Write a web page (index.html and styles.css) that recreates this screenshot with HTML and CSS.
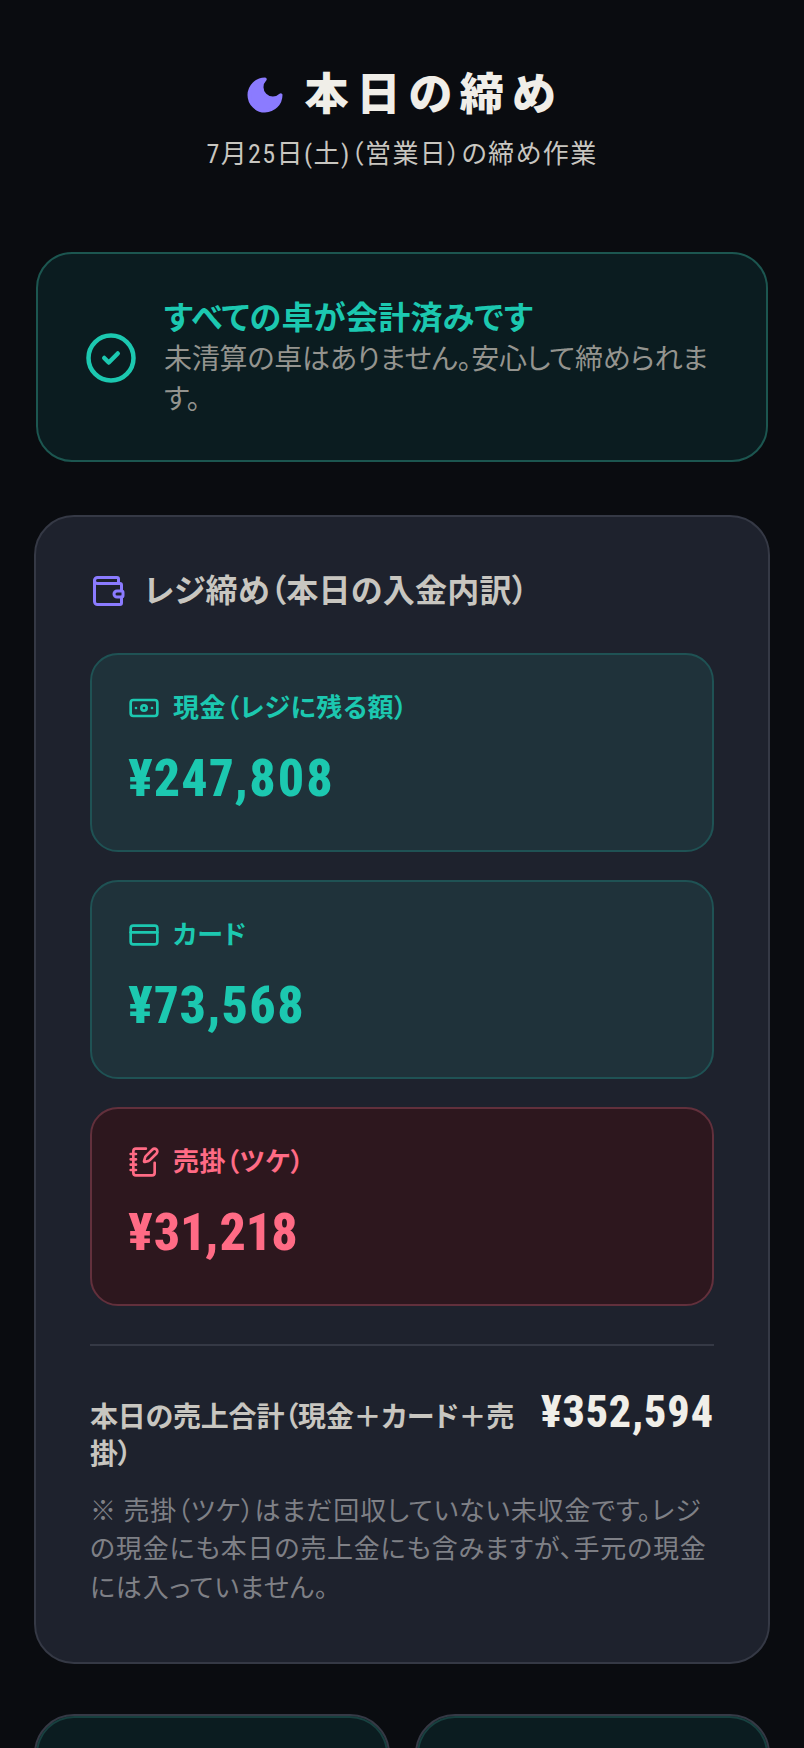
FILE: index.html
```html
<!DOCTYPE html>
<html lang="ja">
<head>
    <meta charset="UTF-8">
    <title>本日の締め</title>
    <link rel="stylesheet" href="styles.css">
</head>
<body>
    <header class="hero">
        <h1 class="hero-title">
            <svg class="moon" viewBox="0 0 24 24"><path d="M12 3a6 6 0 0 0 9 9 9 9 0 1 1-9-9Z"/></svg>
            本日の締め
        </h1>
        <p class="hero-sub">7月25日(土)（営業日）の締め作業</p>
    </header>

    <section class="alert">
        <svg class="alert-icon" viewBox="0 0 24 24"><circle cx="12" cy="12" r="10"/><path d="m9 12 2 2 4-4"/></svg>
        <div>
            <div class="alert-title">すべての卓が会計済みです</div>
            <div class="alert-text">未清算の卓はありません。安心して締められます。</div>
        </div>
    </section>

    <section class="card">
        <h2 class="card-title">
            <svg class="wallet" viewBox="0 0 24 24"><path d="M19 7V4a1 1 0 0 0-1-1H5a2 2 0 0 0 0 4h15a1 1 0 0 1 1 1v4h-3a2 2 0 0 0 0 4h3a1 1 0 0 0 1-1v-2a1 1 0 0 0-1-1"/><path d="M3 5v14a2 2 0 0 0 2 2h15a1 1 0 0 0 1-1v-4"/></svg>
            レジ締め（本日の入金内訳）
        </h2>

        <div class="tile">
            <div class="tile-label">
                <svg class="tile-icon" viewBox="0 0 24 24"><rect x="2" y="6" width="20" height="12" rx="2"/><circle cx="12" cy="12" r="2"/><path d="M6 12h.01M18 12h.01"/></svg>
                現金（レジに残る額）
            </div>
            <div class="tile-amount">¥247,808</div>
        </div>

        <div class="tile">
            <div class="tile-label">
                <svg class="tile-icon" viewBox="0 0 24 24"><rect x="2" y="5" width="20" height="14" rx="2"/><path d="M2 10h20"/></svg>
                カード
            </div>
            <div class="tile-amount">¥73,568</div>
        </div>

        <div class="tile tile-red">
            <div class="tile-label">
                <svg class="tile-icon" viewBox="0 0 24 24"><path d="M13.4 2H6a2 2 0 0 0-2 2v16a2 2 0 0 0 2 2h12a2 2 0 0 0 2-2v-7.4"/><path d="M2 6h4M2 10h4M2 14h4M2 18h4"/><path d="M21.378 5.626a1 1 0 1 0-3.004-3.004l-5.01 5.012a2 2 0 0 0-.506.854l-.837 2.87a.5.5 0 0 0 .62.62l2.87-.837a2 2 0 0 0 .854-.506z"/></svg>
                売掛（ツケ）
            </div>
            <div class="tile-amount">¥31,218</div>
        </div>

        <div class="total">
            <div class="total-label">本日の売上合計（現金＋カード＋売掛）</div>
            <div class="total-value">¥352,594</div>
        </div>
        <p class="note">※ 売掛（ツケ）はまだ回収していない未収金です。レジの現金にも本日の売上金にも含みますが、手元の現金には入っていません。</p>
    </section>

    <div class="bottom-row">
        <div class="bottom-card"></div>
        <div class="bottom-card"></div>
    </div>
</body>
</html>
```

FILE: styles.css
```css
* {
    box-sizing: border-box;
}
html, body {
    height: 1748px;
    overflow: hidden;
}
body {
    margin: 0;
    padding: 63px 34px 0;
    background: #0a0c10;
    color: #f0eee8;
    font-family: Roboto, "Noto Sans CJK JP", sans-serif;
    font-stretch: 80%;
    font-feature-settings: "palt";
}
.hero {
    text-align: center;
    margin-bottom: 80px;
}
.hero-title {
    margin: 0;
    padding-left: 4px;
    font-size: 44px;
    line-height: 64px;
    font-weight: 900;
    letter-spacing: 8px;
    display: flex;
    justify-content: center;
    align-items: center;
    gap: 18px;
}
.moon {
    width: 42px;
    height: 42px;
    fill: #8b7bff;
    stroke: #8b7bff;
    stroke-width: 2;
    stroke-linejoin: round;
}
.hero-sub {
    margin: 9px 0 0;
    font-size: 26px;
    line-height: 36px;
    letter-spacing: 1.4px;
    color: #c8c6c0;
}
.alert {
    margin: 0 2px 53px;
    padding: 42px 46px 40px;
    display: flex;
    align-items: center;
    gap: 26px;
    background: #0b1c20;
    border: 2px solid #1c5650;
    border-radius: 36px;
}
.alert-icon {
    flex: none;
    width: 54px;
    height: 54px;
    fill: none;
    stroke: #1cc8b0;
    stroke-width: 2;
    stroke-linecap: round;
    stroke-linejoin: round;
}
.alert-title {
    font-size: 32px;
    line-height: 44px;
    font-weight: 700;
    letter-spacing: 0.3px;
    color: #1cc8b0;
}
.alert-text {
    font-size: 28px;
    line-height: 40px;
    letter-spacing: -0.2px;
    color: #94948f;
}
.card {
    padding: 52px 54px 55px;
    background: #1e222d;
    border: 2px solid #353945;
    border-radius: 40px;
}
.card-title {
    margin: 0 0 40px;
    font-size: 32px;
    line-height: 44px;
    font-weight: 700;
    letter-spacing: 0.3px;
    color: #c8c6c0;
    display: flex;
    align-items: center;
    gap: 18px;
}
.wallet {
    width: 36px;
    height: 36px;
    fill: none;
    stroke: #8b7bff;
    stroke-width: 2;
    stroke-linecap: round;
    stroke-linejoin: round;
}
.tile {
    height: 199px;
    padding: 32px 36px;
    margin-bottom: 28px;
    background: #1f323a;
    border: 2px solid #1f5254;
    border-radius: 28px;
    color: #1cc8b0;
}
.tile-red {
    background: #2d171e;
    border-color: #62303c;
    color: #ff6b85;
    margin-bottom: 0;
}
.tile-label {
    display: flex;
    align-items: center;
    gap: 13px;
    font-size: 26px;
    line-height: 42px;
    font-weight: 700;
    letter-spacing: 0.6px;
}
.tile-icon {
    width: 32px;
    height: 32px;
    fill: none;
    stroke: currentColor;
    stroke-width: 2;
    stroke-linecap: round;
    stroke-linejoin: round;
}
.tile-amount {
    margin-top: 16px;
    font-size: 52px;
    line-height: 68px;
    font-weight: 800;
    letter-spacing: 1px;
    font-feature-settings: "pnum";
}
.total {
    margin-top: 38px;
    padding-top: 44px;
    border-top: 2px solid #353945;
    display: flex;
    justify-content: space-between;
    align-items: flex-start;
    gap: 24px;
}
.total-label {
    font-size: 28px;
    line-height: 37px;
    font-weight: 700;
    letter-spacing: -0.2px;
    color: #c8c6c0;
    margin-top: 9px;
}
.total-value {
    flex: none;
    font-size: 44px;
    line-height: 44px;
    font-weight: 800;
    letter-spacing: 0.8px;
    font-feature-settings: "pnum";
}
.note {
    margin: 19px 0 0;
    font-size: 26px;
    line-height: 38.4px;
    letter-spacing: 0.8px;
    color: #7f8086;
}
.bottom-row {
    margin-top: 50px;
    display: grid;
    grid-template-columns: 1fr 1fr;
    gap: 25px;
}
.bottom-card {
    height: 200px;
    background: #0b1c20;
    border: 2px solid #353945;
    border-radius: 40px;
    box-shadow: inset 0 0 0 2px #17403f;
}
```
